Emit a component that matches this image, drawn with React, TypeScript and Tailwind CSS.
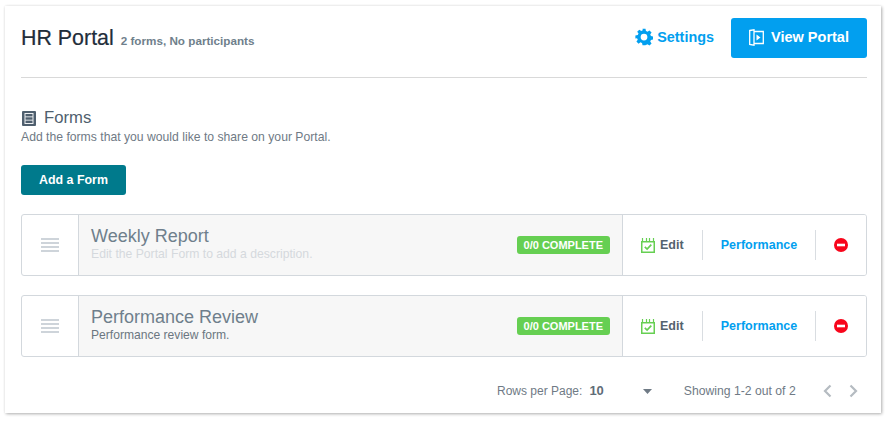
function GearIcon() {
  return (
    <svg width="18" height="18" viewBox="0 0 24 24" className="text-[#029fef]" fill="currentColor">
      <path
        fillRule="evenodd"
        d="M10 1h4l.6 3.1c.7.2 1.4.5 2 .9l2.7-1.8 2.8 2.8-1.8 2.7c.4.6.7 1.3.9 2l3.300.6v4l-3.300.6c-.2.7-.5 1.400-.9 2l1.800 2.600-2.800 2.800-2.700-1.800c-.6.4-1.300.7-2 .9L14 23h-4l-.6-3c-.7-.2-1.400-.5-2-.9l-2.700 1.800-2.800-2.800 1.800-2.600c-.4-.6-.7-1.300-.9-2L.5 13.900v-4l3.300-.6c.2-.7.5-1.400.9-2L2.900 5l2.800-2.800 2.700 1.800c.6-.4 1.300-.7 2-.9L10 1zm2 6.500a4.500 4.500 0 1 0 0 9 4.500 4.500 0 0 0 0-9z"
      />
    </svg>
  );
}

function PortalIcon() {
  return (
    <svg width="15" height="17" viewBox="0 0 15 17" fill="none" stroke="white" strokeWidth="1.3">
      <path d="M5 2.500H14.300V14.500H5" />
      <path d="M.7 1.500L5 .8V16.200L.7 15.500V1.500z" />
      <path d="M7.500 5.500l4 3-4 3z" fill="white" stroke="none" />
    </svg>
  );
}

function FormsIcon() {
  return (
    <svg width="14" height="15" viewBox="0 0 14 15" className="ml-[1px] text-[#4f5f6e]">
      <rect x="0" y="0" width="14" height="15" rx="1" fill="currentColor" />
      <rect x="2.500" y="2" width="9" height="11" fill="#eef0f2" />
      <rect x="3.500" y="3" width="7" height="2.400" fill="#4f5f6e" />
      <rect x="3.500" y="6.300" width="7" height="2.400" fill="#4f5f6e" />
      <rect x="3.500" y="9.600" width="7" height="2.400" fill="#4f5f6e" />
    </svg>
  );
}

function EditIcon() {
  return (
    <svg width="14" height="15" viewBox="0 0 14 15" fill="none">
      <rect x=".75" y="3.750" width="12.500" height="10.500" stroke="#66cf52" strokeWidth="1.500" />
      <path d="M1.500 0v3M5.500 0v3M8.500 0v3M12.500 0v3" stroke="#66cf52" strokeWidth="1.200" />
      <path d="M3.800 8.800l2.300 2.200 4.200-4.400" stroke="#66cf52" strokeWidth="1.700" />
    </svg>
  );
}

function NoEntryIcon() {
  return (
    <svg width="14" height="14" viewBox="0 0 14 14">
      <circle cx="7" cy="7" r="7" fill="#f8051b" />
      <rect x="3" y="5.700" width="8" height="2.600" fill="white" />
    </svg>
  );
}

function DragHandle() {
  return (
    <div className="flex w-[18px] flex-col gap-[2px]">
      {[0, 1, 2, 3].map((i) => (
        <div key={i} className="h-[2px] bg-[#ced4da]" />
      ))}
    </div>
  );
}

function FormRow({
  title,
  description,
  muted,
}: {
  title: string;
  description: string;
  muted?: boolean;
}) {
  return (
    <div className="flex h-[62px] overflow-hidden rounded-[3px] border border-[#d3d8dd]">
      <div className="flex w-[57px] shrink-0 items-center justify-center border-r border-[#d3d8dd]">
        <DragHandle />
      </div>
      <div className="flex min-w-0 flex-1 items-center justify-between bg-[#f7f7f7] pl-3 pr-3">
        <div className="-mt-[3px]">
          <div className="text-[18px] leading-[21px] text-[#6f7f8c]">{title}</div>
          <div className={muted ? "text-[12.200px] leading-[14px] text-[#d5d9dd]" : "text-[12.100px] leading-[14px] text-[#6b7680]"}>
            {description}
          </div>
        </div>
        <span className="rounded-[3px] bg-[#66cf52] px-[7px] text-[11px] font-bold leading-[18px] text-white">
          0/0 COMPLETE
        </span>
      </div>
      <div className="flex w-[244px] shrink-0 items-center border-l border-[#d3d8dd] bg-white">
        <div className="flex h-[30px] w-[80px] items-center gap-[5px] border-r border-[#d9dde1] pl-[18px]">
          <EditIcon />
          <span className="text-[12.500px] font-bold text-[#54626e]">Edit</span>
        </div>
        <div className="flex h-[30px] w-[113px] items-center justify-center border-r border-[#d9dde1]">
          <span className="text-[12.500px] font-bold text-[#029fef]">Performance</span>
        </div>
        <div className="flex flex-1 items-center justify-center">
          <NoEntryIcon />
        </div>
      </div>
    </div>
  );
}

export default function App() {
  return (
    <div className="h-[423px] w-[891px] bg-white pl-[5px] pt-[6px] font-['Liberation_Sans',Arial,sans-serif]">
      <div className="h-[407px] w-[876px] bg-white pl-4 pr-[14px] shadow-[1px_1px_3px_rgba(0,0,0,0.3),0_0_3px_rgba(0,0,0,0.05)]">
        <div className="flex h-[72px] items-center justify-between border-b border-[#d9d9d9] pb-[8px]">
          <div className="flex items-baseline gap-[7px]">
            <h1 className="text-[21.400px] leading-[24px] text-[#1f2d3a] [-webkit-text-stroke:0.2px_#1f2d3a]">HR Portal</h1>
            <span className="text-[11.700px] font-bold text-[#6f7f8c]">2 forms, No participants</span>
          </div>
          <div className="flex items-center gap-[17px]">
            <a className="flex items-center gap-[4px] text-[14.400px] font-bold text-[#029fef]">
              <GearIcon />
              Settings
            </a>
            <button className="flex h-10 w-[136px] items-center justify-center gap-[7px] rounded-[3px] bg-[#029fef] text-[14.500px] font-bold text-white">
              <PortalIcon />
              View Portal
            </button>
          </div>
        </div>

        <div className="mt-[30px] flex items-center gap-[8px]">
          <FormsIcon />
          <h2 className="text-[16.700px] leading-[20px] text-[#4f5f6e]">Forms</h2>
        </div>
        <p className="mt-[1px] text-[12.200px] leading-[16px] text-[#6f7a85]">
          Add the forms that you would like to share on your Portal.
        </p>
        <button className="mt-[20px] h-[30px] w-[105px] rounded-[3px] bg-[#007a8c] text-[12.400px] font-bold text-white">
          Add a Form
        </button>

        <div className="mt-[19px] flex flex-col gap-[19px]">
          <FormRow title="Weekly Report" description="Edit the Portal Form to add a description." muted />
          <FormRow title="Performance Review" description="Performance review form." />
        </div>

        <div className="mt-[26px] flex items-center text-[12px] leading-[16px] text-[#6f7a85]">
          <span className="ml-[476px]">Rows per Page:</span>
          <span className="ml-[7px] text-[13px] font-bold text-[#5f6c78]">10</span>
          <svg width="9" height="5" viewBox="0 0 9 5" className="ml-[39px]">
            <path d="M0 0h9L4.500 5z" fill="#6f7a85" />
          </svg>
          <span className="ml-[32px] text-[12.200px]">Showing 1-2 out of 2</span>
          <svg width="9" height="14" viewBox="0 0 9 14" fill="none" stroke="#b5bbc1" strokeWidth="2.200" className="ml-[27px]">
            <path d="M7.500 1.500L2 7l5.500 5.500" />
          </svg>
          <svg width="9" height="14" viewBox="0 0 9 14" fill="none" stroke="#b5bbc1" strokeWidth="2.200" className="ml-[17px]">
            <path d="M1.500 1.500L7 7l-5.500 5.500" />
          </svg>
        </div>
      </div>
    </div>
  );
}
